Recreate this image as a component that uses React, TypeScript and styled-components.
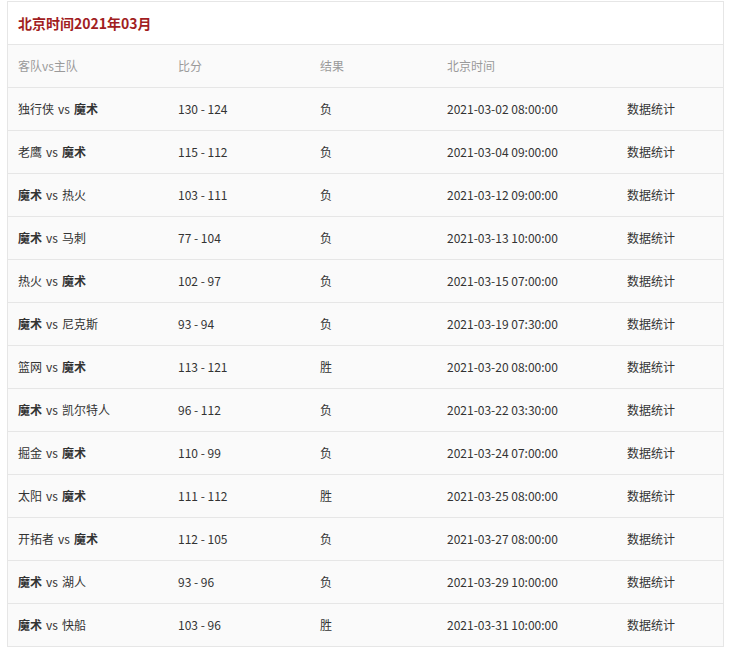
import React from "react";
import styled, { createGlobalStyle } from "styled-components";

const Global = createGlobalStyle`
  html, body { margin: 0; padding: 0; background: #ffffff; }
  body { font-family: "Noto Sans CJK SC", "Liberation Sans", sans-serif; }
`;

const Panel = styled.section`
  margin: 1px 0 0 7px;
  width: 717px;
  box-sizing: border-box;
  border: 1px solid #e6e6e6;
  border-bottom: none;
  background: #fafafa;
`;

const TitleBar = styled.h2`
  margin: 0;
  height: 43px;
  box-sizing: border-box;
  display: flex;
  align-items: center;
  padding-left: 10px;
  background: #ffffff;
  border-bottom: 1px solid #e6e6e6;
  font-size: 14px;
  font-weight: bold;
  color: #a11d22;
`;

const Row = styled.div`
  display: grid;
  grid-template-columns: 160px 142px 127px 180px 1fr;
  height: 43px;
  box-sizing: border-box;
  border-bottom: 1px solid #e6e6e6;
  align-items: center;
`;

const Cell = styled.div<{ $head?: boolean }>`
  padding-left: 10px;
  font-size: 12px;
  line-height: 16px;
  color: ${(p) => (p.$head ? "#9a9a9a" : "#333333")};
  white-space: nowrap;
`;

const Team = styled.span<{ $hl: boolean }>`
  font-weight: ${(p) => (p.$hl ? "bold" : "normal")};
`;

const Vs = styled.span`
  margin: 0 4px;
`;

type Game = [string, string, string, string, string];

const games: Game[] = [
  ["独行侠", "魔术", "130 - 124", "负", "2021-03-02 08:00:00"],
  ["老鹰", "魔术", "115 - 112", "负", "2021-03-04 09:00:00"],
  ["魔术", "热火", "103 - 111", "负", "2021-03-12 09:00:00"],
  ["魔术", "马刺", "77 - 104", "负", "2021-03-13 10:00:00"],
  ["热火", "魔术", "102 - 97", "负", "2021-03-15 07:00:00"],
  ["魔术", "尼克斯", "93 - 94", "负", "2021-03-19 07:30:00"],
  ["篮网", "魔术", "113 - 121", "胜", "2021-03-20 08:00:00"],
  ["魔术", "凯尔特人", "96 - 112", "负", "2021-03-22 03:30:00"],
  ["掘金", "魔术", "110 - 99", "负", "2021-03-24 07:00:00"],
  ["太阳", "魔术", "111 - 112", "胜", "2021-03-25 08:00:00"],
  ["开拓者", "魔术", "112 - 105", "负", "2021-03-27 08:00:00"],
  ["魔术", "湖人", "93 - 96", "负", "2021-03-29 10:00:00"],
  ["魔术", "快船", "103 - 96", "胜", "2021-03-31 10:00:00"],
];

export default function App() {
  return (
    <>
      <Global />
      <Panel>
        <TitleBar>北京时间2021年03月</TitleBar>
        <Row>
          <Cell $head>客队vs主队</Cell>
          <Cell $head>比分</Cell>
          <Cell $head>结果</Cell>
          <Cell $head>北京时间</Cell>
          <Cell $head></Cell>
        </Row>
        {games.map(([a, h, s, r, t], i) => (
          <Row key={i}>
            <Cell>
              <Team $hl={a === "魔术"}>{a}</Team>
              <Vs>vs</Vs>
              <Team $hl={h === "魔术"}>{h}</Team>
            </Cell>
            <Cell>{s}</Cell>
            <Cell>{r}</Cell>
            <Cell>{t}</Cell>
            <Cell>数据统计</Cell>
          </Row>
        ))}
      </Panel>
    </>
  );
}
